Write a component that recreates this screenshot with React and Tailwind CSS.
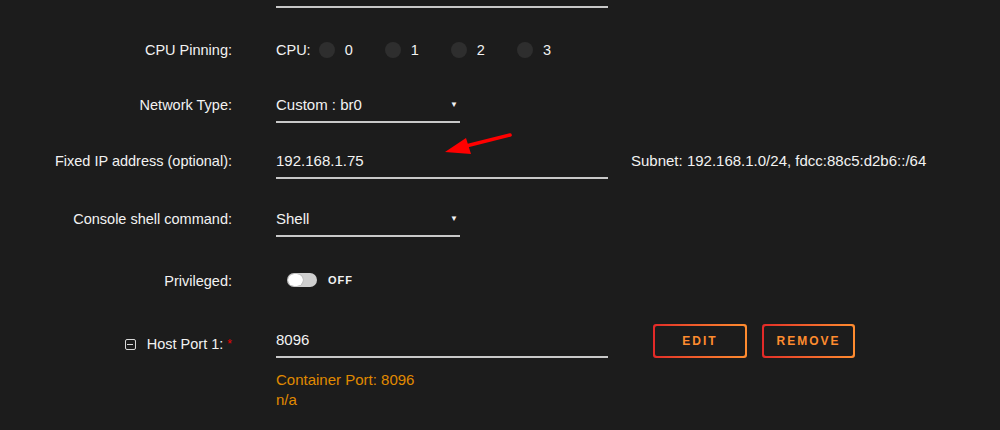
import { useState } from "react";

const font = { fontFamily: '"Liberation Sans", Arial, sans-serif' };

// 라벨 + 내용 한 줄 (높이 40px 고정)
const Row = ({ label, children, className = "" }) => (
	<div className={`flex items-start h-[40px] ${className}`}>
		<div className="w-[232px] shrink-0 text-right pt-[10px] leading-[20px] text-[14.5px]">{label}</div>
		<div className="ml-[44px] flex items-start">{children}</div>
	</div>
);

const Field = ({ value, wide }) => (
	<div className={`${wide ? "w-[332px]" : "w-[184px]"} pt-[10px] pb-[6px] leading-[20px] border-b-2 border-[#c8c8c8]`}>
		{value}
	</div>
);

const Select = ({ value }) => (
	<div className="w-[184px] pt-[10px] pb-[6px] leading-[20px] border-b-2 border-[#c8c8c8] flex items-center justify-between">
		<span>{value}</span>
		<span className="text-[8px] leading-none mr-[2px]">▼</span>
	</div>
);

const GradientButton = ({ children, w }) => (
	<div className={`${w} h-[34px] rounded-[3px] p-[2px] bg-gradient-to-r from-[#e22828] to-[#ff8c2f]`}>
		<div className="w-full h-full rounded-[2px] bg-[#1c1c1c] flex items-center justify-center text-[12px] font-bold tracking-[2px] text-[#ff8c2f]">
			{children}
		</div>
	</div>
);

export default function App() {
	const [privileged, setPrivileged] = useState(false);

	return (
		<div className="relative w-[1000px] h-[430px] overflow-hidden bg-[#1c1c1c] text-[#f2f2f2] text-[15px]" style={font}>
			{/* 위쪽 입력칸의 밑줄 */}
			<div className="ml-[276px] w-[332px] h-[8px] border-b-2 border-[#c8c8c8]"></div>

			<Row label="CPU Pinning:" className="mt-[22px]">
				<div className="pt-[10px] leading-[20px] flex items-center text-[14.5px]">
					<span>CPU:</span>
					{["0", "1", "2", "3"].map((n, i) => (
						<div key={n} className={`flex items-center ${i === 0 ? "ml-[8px]" : "ml-[32px]"}`}>
							<span className="w-[16px] h-[16px] rounded-full bg-[#2e2e2e]"></span>
							<span className="ml-[10px]">{n}</span>
						</div>
					))}
				</div>
			</Row>

			<Row label="Network Type:" className="mt-[15px]">
				<Select value="Custom : br0" />
			</Row>

			<Row label="Fixed IP address (optional):" className="mt-[16px]">
				<Field value="192.168.1.75" wide />
				<div className="ml-[23px] pt-[10px] leading-[20px]">Subnet: 192.168.1.0/24, fdcc:88c5:d2b6::/64</div>
			</Row>

			<Row label="Console shell command:" className="mt-[18px]">
				<Select value="Shell" />
			</Row>

			<Row label="Privileged:" className="mt-[22px]">
				<div className="ml-[11px] mt-[12px] flex items-center">
					<button
						onClick={() => setPrivileged(!privileged)}
						className="w-[30px] h-[14px] rounded-full bg-[#cfcfcf] flex items-center p-[1px]"
					>
						<span className="w-[15px] h-[12px] rounded-full bg-white shadow-[0_0_1px_rgba(0,0,0,0.5)]"></span>
					</button>
					<span className="ml-[11px] text-[11px] font-bold tracking-[1px] leading-none">{privileged ? "ON" : "OFF"}</span>
				</div>
			</Row>

			<Row
				className="mt-[19px]"
				label={
					<span className="inline-flex items-center justify-end">
						<span className="w-[11px] h-[11px] rounded-[2px] border-[1.5px] border-[#d8d8d8] flex items-center justify-center mr-[11px]">
							<span className="w-[6px] h-[1.5px] bg-[#d8d8d8]"></span>
						</span>
						Host Port 1:<span className="ml-[4px] text-[#e00] text-[12px] self-start">*</span>
					</span>
				}
			>
				<div className="flex flex-col">
					<Field value="8096" wide />
					<div className="mt-[12px] leading-[20px] text-[#e08a00]">Container Port: 8096</div>
					<div className="leading-[20px] text-[#e08a00]">n/a</div>
				</div>
				<div className="ml-[45px] mt-[4px] flex gap-[15px]">
					<GradientButton w="w-[94px]">EDIT</GradientButton>
					<GradientButton w="w-[93px]">REMOVE</GradientButton>
				</div>
			</Row>

			{/* 빨간 화살표 표시 */}
			<svg className="absolute left-[440px] top-[128px]" width="80" height="32" viewBox="440 128 80 32">
				<line x1="510" y1="135" x2="462" y2="147" stroke="#ff0000" strokeWidth="3.5" strokeLinecap="round" />
				<polygon points="445,152 466,138 471,154" fill="#ff0000" />
			</svg>
		</div>
	);
}
